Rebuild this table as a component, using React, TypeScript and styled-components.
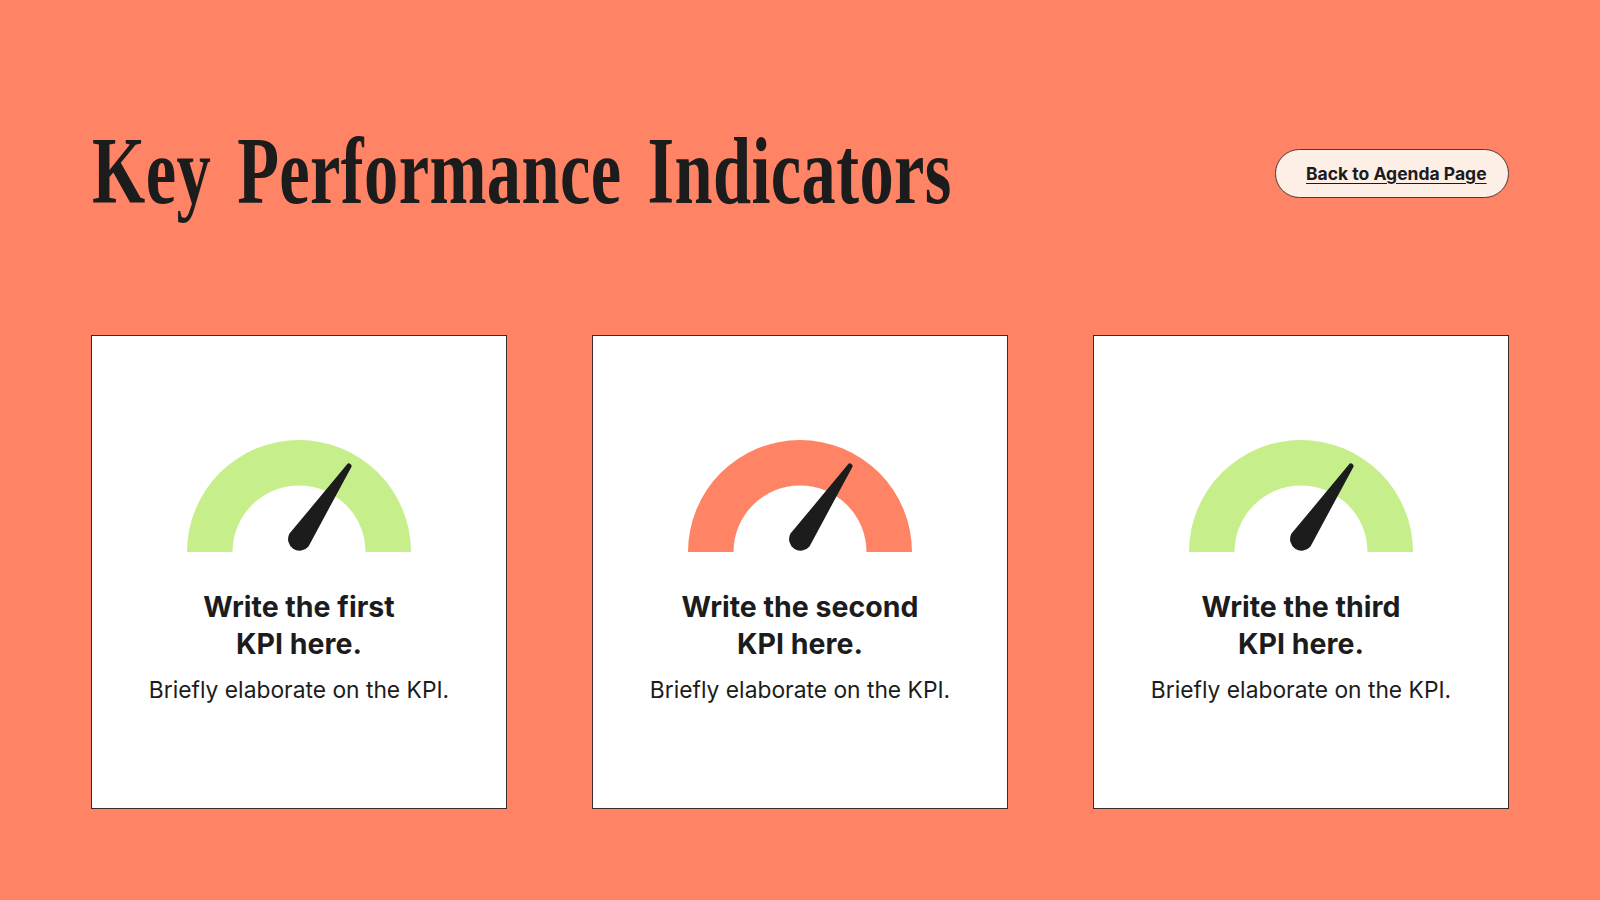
import React from "react";
import styled, { createGlobalStyle } from "styled-components";

const GlobalStyle = createGlobalStyle`
  html, body {
    margin: 0;
    padding: 0;
    background: #ff8466;
  }
  body {
    font-family: Inter, Roboto, "Liberation Sans", sans-serif;
    color: #1c1c1c;
  }
`;

const Page = styled.div`
  width: 1600px;
  height: 900px;
  box-sizing: border-box;
  padding: 124px 91px 0 91px;
  display: flex;
  flex-direction: column;
  overflow: hidden;
`;

const Header = styled.header`
  display: flex;
  justify-content: space-between;
  align-items: center;
  height: 95px;
`;

const Title = styled.h1`
  margin: 0 0 0 1px;
  flex: 0 0 860px;
  width: 860px;
  font-family: "Liberation Serif", "Times New Roman", serif;
  font-weight: 700;
  font-size: 95px;
  line-height: 95px;
  letter-spacing: 0.5px;
  word-spacing: 12px;
  white-space: nowrap;
  transform: scaleX(0.721);
  transform-origin: left center;
  color: #1c1c1c;
`;

const BackButton = styled.a`
  flex: 0 0 234px;
  margin-top: 4px;
  box-sizing: border-box;
  width: 234px;
  height: 49px;
  display: flex;
  align-items: center;
  padding: 0 18px 0 30px;
  border: 1px solid #4a3a36;
  border-radius: 25px;
  background: #fdeee6;
  font-family: Inter, Roboto, "Liberation Sans", sans-serif;
  font-weight: 700;
  font-size: 17.5px;
  color: #1c1c1c;
  text-decoration: underline;
  text-underline-offset: 3px;
  white-space: nowrap;
  cursor: pointer;
`;

const Cards = styled.section`
  margin-top: 116px;
  display: grid;
  grid-template-columns: repeat(3, 416px);
  column-gap: 85px;
`;

const Card = styled.article`
  box-sizing: border-box;
  height: 474px;
  background: #ffffff;
  border: 1.5px solid #3a2a28;
  display: flex;
  flex-direction: column;
  align-items: center;
  justify-content: center;
  text-align: center;
`;

const GaugeSvg = styled.svg`
  display: block;
  width: 224px;
  height: 112px;
`;

const KpiTitle = styled.h2`
  margin: 36px 0 0 0;
  font-family: Inter, Roboto, "Liberation Sans", sans-serif;
  font-weight: 700;
  font-size: 28.5px;
  line-height: 37px;
  color: #1c1c1c;
`;

const KpiText = styled.p`
  margin: 13px 0 0 0;
  font-family: Inter, Roboto, "Liberation Sans", sans-serif;
  font-weight: 400;
  font-size: 22.8px;
  line-height: 29px;
  color: #1c1c1c;
`;

const Gauge: React.FC<{ color: string }> = ({ color }) => (
  <GaugeSvg viewBox="0 0 224 112">
    <path
      d="M0,112 A112,112 0 0 1 224,112 L178.5,112 A66.5,66.5 0 0 0 45.5,112 Z"
      fill={color}
    />
    <path
      d="M121.5,106.4 L164.1,27.4 A2.5,2.5 0 0 0 159.9,24.6 L102.5,93.6 A11.5,11.5 0 0 0 121.5,106.4 Z"
      fill="#1c1c1c"
    />
  </GaugeSvg>
);

const kpis = [
  { line1: "Write the first", color: "#c6ee8a" },
  { line1: "Write the second", color: "#ff8466" },
  { line1: "Write the third", color: "#c6ee8a" },
];

export default function App() {
  return (
    <>
      <GlobalStyle />
      <Page>
        <Header>
          <Title>Key Performance Indicators</Title>
          <BackButton>Back to Agenda Page</BackButton>
        </Header>
        <Cards>
          {kpis.map((k) => (
            <Card key={k.line1}>
              <Gauge color={k.color} />
              <KpiTitle>
                {k.line1}
                <br />
                KPI here.
              </KpiTitle>
              <KpiText>Briefly elaborate on the KPI.</KpiText>
            </Card>
          ))}
        </Cards>
      </Page>
    </>
  );
}
